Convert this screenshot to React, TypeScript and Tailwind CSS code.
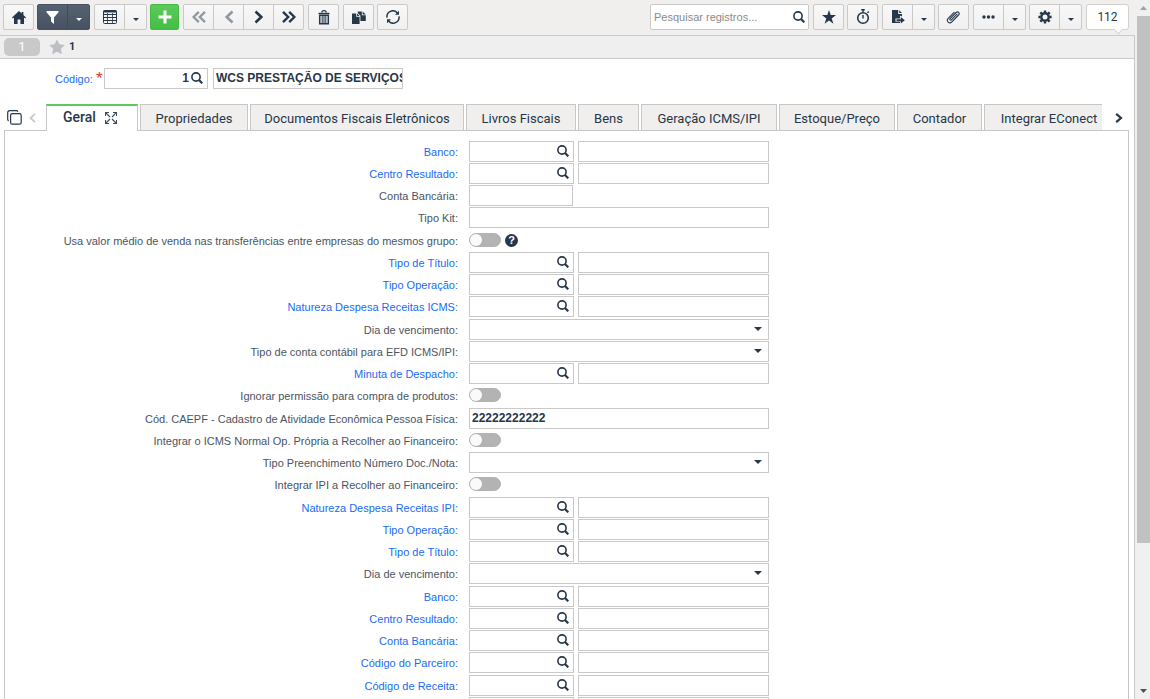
import React, { useId } from "react";
import type { ReactNode } from "react";

type IconProps = { className?: string };

function HomeIcon() {
  return (
    <svg width="14" height="13" viewBox="0 0 14 13" fill="currentColor" aria-hidden="true">
      <path d="M7 0 0 6.6l.8.8L2 6.6V13h3.6V8.6h2.8V13H12V6.6l1.2.8.8-.8-2.6-2.5V.9H9.6v1.5z" />
    </svg>
  );
}

function FunnelIcon() {
  return (
    <svg width="13" height="13" viewBox="0 0 13 13" fill="currentColor" aria-hidden="true">
      <path d="M.5 0h12v1.200L8 6.500v6.500L5 10.500v-4L.5 1.200z" />
    </svg>
  );
}

function GridIcon() {
  return (
    <svg width="14" height="14" viewBox="0 0 14 14" fill="none" stroke="currentColor" aria-hidden="true">
      <rect x=".5" y=".5" width="13" height="13" rx="1" strokeWidth="1" />
      <path d="M.5 1.500h13" strokeWidth="2" />
      <path d="M.5 4.500h13M.5 7.500h13M.5 10.500h13" strokeWidth="1" />
      <path d="M4.500 3v10M9.500 3v10" strokeWidth=".8" />
    </svg>
  );
}

function PlusIcon() {
  return (
    <svg width="14" height="14" viewBox="0 0 14 14" fill="currentColor" aria-hidden="true">
      <path d="M5.500.5h3v5h5v3h-5v5h-3v-5h-5v-3h5z" />
    </svg>
  );
}

function ChevronIcon({ className = "" }: IconProps) {
  return (
    <svg className={className} width="10" height="14" viewBox="0 0 10 14" fill="none" stroke="currentColor" strokeWidth="2.600" aria-hidden="true">
      <path d="m1.500 1.500 5.800 5.500-5.800 5.500" />
    </svg>
  );
}

function DoubleChevronIcon({ className = "" }: IconProps) {
  return (
    <svg className={className} width="14" height="14" viewBox="0 0 14 14" fill="none" stroke="currentColor" strokeWidth="2.400" aria-hidden="true">
      <path d="m1 1.800 5.200 5.200L1 12.200M7.200 1.800 12.400 7l-5.200 5.200" />
    </svg>
  );
}

function TrashIcon() {
  return (
    <svg width="12" height="15" viewBox="0 0 12 15" fill="none" stroke="currentColor" aria-hidden="true">
      <path d="M3.800 2.600C3.800 0 8.200 0 8.200 2.600" strokeWidth="1.300" />
      <path d="M.5 3.500h11" strokeWidth="1.400" />
      <path d="M1.700 5.200h8.600v8.600H1.700z" strokeWidth="1.500" />
      <path d="M4.200 5v8.500M6 5v8.500M7.800 5v8.500" strokeWidth="1" />
    </svg>
  );
}

function CopyIcon() {
  return (
    <svg width="14" height="13" viewBox="0 0 14 13" fill="currentColor" aria-hidden="true">
      <path d="M0 2.400h4.200v3.400h3.400V13H0z" />
      <path d="M5 2.600 7.600 5H5zM5.800.4h4v3.800h4V10H8.400V4.600L5.800 2.200z" />
      <path d="m10.600.4 3.200 3h-3.200z" />
    </svg>
  );
}

function RefreshIcon() {
  return (
    <svg width="14" height="14" viewBox="0 0 14 14" fill="none" stroke="currentColor" strokeWidth="1.500" aria-hidden="true">
      <path d="M1 7.600A5.900 5.900 0 0 1 11.400 3M13 6.400A5.900 5.900 0 0 1 2.600 11" />
      <path d="M13 .8v4H9zM1 13.200v-4h4z" fill="currentColor" stroke="none" />
    </svg>
  );
}

function SearchIcon() {
  return (
    <svg width="12" height="12" viewBox="0 0 12 12" fill="none" stroke="currentColor" aria-hidden="true">
      <circle cx="5" cy="5" r="4.100" strokeWidth="1.600" />
      <path d="m8 8 3.300 3.300" strokeWidth="2.200" />
    </svg>
  );
}

function StarIcon({ className = "" }: IconProps) {
  return (
    <svg className={className} viewBox="0 0 14 14" fill="currentColor" aria-hidden="true">
      <path d="m7 0 1.700 5.100H14L9.700 8.400l1.700 5.300L7 10.500l-4.400 3.200 1.700-5.300L0 5.100h5.300z" />
    </svg>
  );
}

function WideStarIcon({ className = "" }: IconProps) {
  return (
    <svg className={className} viewBox="0 0 16 16" fill="currentColor" aria-hidden="true">
      <path d="m8 .4 2.400 4.900 5.400.7-3.900 3.800.9 5.500L8 12.700l-4.800 2.600.9-5.500L.2 6l5.400-.7z" />
    </svg>
  );
}

function StopwatchIcon() {
  return (
    <svg width="14" height="16" viewBox="0 0 14 16" fill="none" stroke="currentColor" aria-hidden="true">
      <circle cx="7" cy="9" r="5.300" strokeWidth="1.600" />
      <path d="M5.200.8h3.600M7 1v2.500M7 6v3.600M11.400 3.700l1.400-1.300" strokeWidth="1.400" />
    </svg>
  );
}

function ExportIcon() {
  return (
    <svg width="14" height="14" viewBox="0 0 14 14" fill="currentColor" aria-hidden="true">
      <path d="M1 0h6.200v4H11v2.400L9 5.600v2.800H4.500v3.400H9V13H1z" />
      <path d="M8.200.2 11 3H8.200zM5.500 9.200h4.300V7l4 3.200-4 3.300v-2.200H5.500z" />
    </svg>
  );
}

function ClipIcon() {
  return (
    <svg width="16" height="14" viewBox="0 0 15 14" fill="none" stroke="currentColor" strokeWidth="1.100" strokeLinecap="round" aria-hidden="true">
      <path d="m10.500 4.200-5.600 5.700c-.9.900-2.200-.3-1.300-1.300l6-6.100c1.700-1.600 4.200.6 2.500 2.500l-6.700 6.900c-2.600 2.500-6.200-.8-3.700-3.500l5.900-6" />
    </svg>
  );
}

function DotsIcon() {
  return (
    <svg width="13" height="4" viewBox="0 0 13 4" fill="currentColor" aria-hidden="true">
      <circle cx="2" cy="2" r="1.700" />
      <circle cx="6.500" cy="2" r="1.700" />
      <circle cx="11" cy="2" r="1.700" />
    </svg>
  );
}

function GearIcon() {
  return (
    <svg width="14" height="14" viewBox="0 0 14 14" fill="none" stroke="currentColor" aria-hidden="true">
      <circle cx="7" cy="7" r="3.700" strokeWidth="2.400" />
      <path d="M7 .4v2.200M7 11.400v2.200M.4 7h2.200M11.400 7h2.200M2.300 2.300l1.600 1.600M10.100 10.100l1.600 1.600M2.300 11.700l1.600-1.600M10.100 3.900l1.600-1.600" strokeWidth="2.400" />
    </svg>
  );
}

function CaretIcon() {
  return (
    <svg width="8" height="4" viewBox="0 0 8 4" fill="currentColor" aria-hidden="true">
      <path d="M0 0h8L4 4z" />
    </svg>
  );
}

function WindowsIcon() {
  return (
    <svg width="15" height="15" viewBox="0 0 15 15" fill="none" stroke="currentColor" strokeWidth="1.200" aria-hidden="true">
      <rect x="3.600" y="3.600" width="10.600" height="10.600" rx="1.800" />
      <path d="M1.700 10.900C1 10.600.7 10 .7 9.300V2.600C.7 1.500 1.500.7 2.600.7h6.700c.7 0 1.300.4 1.600 1" />
    </svg>
  );
}

function ExpandIcon() {
  return (
    <svg className="text-[#3d4c5d]" width="12" height="12" viewBox="0 0 12 12" fill="none" stroke="currentColor" strokeWidth="1.100" aria-hidden="true">
      <path d="M.5 4V.5H4M8 .5h3.500V4M11.500 8v3.500H8M4 11.500H.5V8M1 1l4 4M11 1 7 5M1 11l4-4M11 11 7 7" />
    </svg>
  );
}

const face = "border-[#c9c9c9] bg-linear-to-b from-[#f8f8f8] to-[#f0f0f0] text-[#26374a]";

function ToolButton({ label, children, className = "" }: { label: string; children: ReactNode; className?: string }) {
  return (
    <button type="button" aria-label={label} className={`flex h-[26px] w-[31px] shrink-0 items-center justify-center rounded-[2px] border ${face} ${className}`}>
      {children}
    </button>
  );
}

function SplitButton({ label, dark = false, children, className = "" }: { label: string; dark?: boolean; children: ReactNode; className?: string }) {
  const tone = dark ? "border-[#465261] bg-linear-to-b from-[#566171] to-[#465261] text-white" : face;
  return (
    <div className={`flex h-[26px] w-[53px] shrink-0 rounded-[2px] border ${tone} ${className}`}>
      <button type="button" aria-label={label} className="flex w-[29px] items-center justify-center">
        {children}
      </button>
      <button type="button" aria-label={`${label}: opções`} className={`flex flex-1 items-center justify-center border-l pt-1 ${dark ? "border-[#414c5a]" : "border-[#c9c9c9]"}`}>
        <svg width="6" height="3" viewBox="0 0 6 3" fill="currentColor" aria-hidden="true">
          <path d="M0 0h6L3 3z" />
        </svg>
      </button>
    </div>
  );
}

function Toolbar() {
  return (
    <header className="flex h-9 shrink-0 items-start justify-between border-b border-[#cbcbcb] bg-[#f0efee] pt-1 pr-[6px] pl-[3px]">
      <div className="flex gap-[3px]">
        <ToolButton label="Início"><HomeIcon /></ToolButton>
        <SplitButton label="Filtro" dark className="mr-px"><FunnelIcon /></SplitButton>
        <SplitButton label="Modo grade"><GridIcon /></SplitButton>
        <div className="flex gap-1">
          <button type="button" aria-label="Adicionar" className="flex h-[26px] w-[29px] items-center justify-center rounded-[2px] border border-[#44b944] bg-linear-to-b from-[#5bca5b] to-[#44be44] text-white">
            <PlusIcon />
          </button>
          <div className={`flex h-[26px] w-[121px] divide-x divide-[#c9c9c9] rounded-[2px] border ${face}`}>
            <button type="button" aria-label="Primeiro" className="flex flex-1 items-center justify-center text-[#8f98a3]"><DoubleChevronIcon className="rotate-180" /></button>
            <button type="button" aria-label="Anterior" className="flex flex-1 items-center justify-center text-[#8f98a3]"><ChevronIcon className="rotate-180" /></button>
            <button type="button" aria-label="Próximo" className="flex flex-1 items-center justify-center"><ChevronIcon /></button>
            <button type="button" aria-label="Último" className="flex flex-1 items-center justify-center"><DoubleChevronIcon /></button>
          </div>
          <ToolButton label="Excluir"><TrashIcon /></ToolButton>
          <ToolButton label="Duplicar"><CopyIcon /></ToolButton>
        </div>
        <ToolButton label="Atualizar"><RefreshIcon /></ToolButton>
      </div>
      <div className="flex gap-[3px]">
        <div className="mr-px flex h-[26px] w-[159px] items-center rounded-[2px] border border-[#c9c9c9] bg-white pr-[3px] pl-[3px] text-[#26374a]">
          <input type="text" aria-label="Pesquisar registros" placeholder="Pesquisar registros..." className="min-w-0 flex-1 text-[11px] outline-none placeholder:text-[#8a8a8a]" />
          <button type="button" aria-label="Pesquisar"><SearchIcon /></button>
        </div>
        <ToolButton label="Favoritos"><StarIcon className="size-[14px]" /></ToolButton>
        <ToolButton label="Cronômetro" className="mr-px"><StopwatchIcon /></ToolButton>
        <SplitButton label="Exportar"><ExportIcon /></SplitButton>
        <ToolButton label="Anexos" className="mr-px"><ClipIcon /></ToolButton>
        <SplitButton label="Mais"><DotsIcon /></SplitButton>
        <SplitButton label="Configurações"><GearIcon /></SplitButton>
        <button type="button" className="relative ml-px h-[26px] w-[43px] rounded-[3px] border border-[#d0d0d0] bg-white font-[Roboto,sans-serif] text-[12px] text-[#26374a]">
          112
          <span className="absolute top-[21px] right-[6px] size-[7px] rotate-45 border-r border-b border-[#d0d0d0] bg-white" />
        </button>
      </div>
    </header>
  );
}

function TextBox({ id, label, value = "", className = "" }: { id?: string; label?: string; value?: string; className?: string }) {
  return (
    <input id={id} aria-label={label} type="text" defaultValue={value} className={`h-[21px] border border-[#c9c9c9] bg-white pl-[2px] pb-px text-[12px] font-bold text-[#26374a] outline-none ${className}`} />
  );
}

function LookupBox({ id, value = "", className = "" }: { id: string; value?: string; className?: string }) {
  return (
    <div className={`flex h-[21px] items-center border border-[#c9c9c9] bg-white pr-1 pb-px text-[#26374a] ${className}`}>
      <input id={id} type="text" defaultValue={value} className="min-w-0 flex-1 pr-[2px] text-right text-[12px] font-bold outline-none" />
      <button type="button" aria-label="Pesquisar"><SearchIcon /></button>
    </div>
  );
}

type Kind = "lookup" | "short" | "text" | "toggle" | "select";
type Field = { label: string; kind: Kind; link?: boolean; value?: string; help?: boolean };

const fields: Field[] = [
  { label: "Banco:", kind: "lookup", link: true },
  { label: "Centro Resultado:", kind: "lookup", link: true },
  { label: "Conta Bancária:", kind: "short" },
  { label: "Tipo Kit:", kind: "text" },
  { label: "Usa valor médio de venda nas transferências entre empresas do mesmos grupo:", kind: "toggle", help: true },
  { label: "Tipo de Título:", kind: "lookup", link: true },
  { label: "Tipo Operação:", kind: "lookup", link: true },
  { label: "Natureza Despesa Receitas ICMS:", kind: "lookup", link: true },
  { label: "Dia de vencimento:", kind: "select" },
  { label: "Tipo de conta contábil para EFD ICMS/IPI:", kind: "select" },
  { label: "Minuta de Despacho:", kind: "lookup", link: true },
  { label: "Ignorar permissão para compra de produtos:", kind: "toggle" },
  { label: "Cód. CAEPF - Cadastro de Atividade Econômica Pessoa Física:", kind: "text", value: "22222222222" },
  { label: "Integrar o ICMS Normal Op. Própria a Recolher ao Financeiro:", kind: "toggle" },
  { label: "Tipo Preenchimento Número Doc./Nota:", kind: "select" },
  { label: "Integrar IPI a Recolher ao Financeiro:", kind: "toggle" },
  { label: "Natureza Despesa Receitas IPI:", kind: "lookup", link: true },
  { label: "Tipo Operação:", kind: "lookup", link: true },
  { label: "Tipo de Título:", kind: "lookup", link: true },
  { label: "Dia de vencimento:", kind: "select" },
  { label: "Banco:", kind: "lookup", link: true },
  { label: "Centro Resultado:", kind: "lookup", link: true },
  { label: "Conta Bancária:", kind: "lookup", link: true },
  { label: "Código do Parceiro:", kind: "lookup", link: true },
  { label: "Código de Receita:", kind: "lookup", link: true },
  { label: "", kind: "lookup" },
];

function Control({ field, id }: { field: Field; id: string }) {
  switch (field.kind) {
    case "lookup":
      return (
        <div className="flex w-[300px] gap-1">
          <LookupBox id={id} className="w-[105px]" />
          <TextBox label={`Descrição ${field.label}`} className="min-w-0 flex-1" />
        </div>
      );
    case "short":
      return <TextBox id={id} className="w-[104px]" />;
    case "text":
      return <TextBox id={id} value={field.value} className="w-[300px]" />;
    case "select":
      return (
        <div className="relative w-[300px] text-[#26374a]">
          <select id={id} className="block h-[21px] w-full appearance-none border border-[#c9c9c9] bg-white px-[3px] text-[12px] outline-none">
            <option value=""></option>
          </select>
          <span className="pointer-events-none absolute top-2 right-[7px]"><CaretIcon /></span>
        </div>
      );
    case "toggle":
      return (
        <div className="flex items-center gap-1 pb-px">
          <input
            id={id}
            type="checkbox"
            className="h-[14px] w-8 appearance-none rounded-full border border-[#b3b3b3] bg-[#b3b3b3] before:block before:size-3 before:rounded-full before:bg-[#fafafa] checked:bg-[#5bca5b] checked:before:ml-auto"
          />
          {field.help && (
            <button type="button" aria-label="Ajuda" className="flex size-[13px] items-center justify-center rounded-full bg-[#26374a] text-[11px] leading-none font-bold text-white">
              ?
            </button>
          )}
        </div>
      );
  }
}

function FieldRow({ field }: { field: Field }) {
  const id = useId();
  return (
    <div className="mb-px flex h-[21px] items-center gap-[11px] nth-[4n]:mb-[2px]">
      <label htmlFor={id} className={`w-[453px] shrink-0 pt-[2px] text-right text-[11px] whitespace-nowrap ${field.link ? "text-[#1a6bf5]" : "text-[#4a5563]"}`}>
        {field.label}
      </label>
      <Control field={field} id={id} />
    </div>
  );
}

const tabs = [
  { name: "Propriedades", width: "w-[108px]" },
  { name: "Documentos Fiscais Eletrônicos", width: "w-[214px]" },
  { name: "Livros Fiscais", width: "w-[110px]" },
  { name: "Bens", width: "w-[61px]" },
  { name: "Geração ICMS/IPI", width: "w-[136px]" },
  { name: "Estoque/Preço", width: "w-[116px]" },
  { name: "Contador", width: "w-[85px]" },
  { name: "Integrar EConect", width: "w-[130px]" },
];

function TabBar() {
  return (
    <div className="flex h-[27px] shrink-0 items-stretch pr-[5px] pl-1 text-[#26374a]">
      <div className="flex w-[42px] items-center gap-[7px] border-b border-[#c9c6c6] pt-px pl-[3px]">
        <button type="button" aria-label="Abas"><WindowsIcon /></button>
        <button type="button" aria-label="Abas anteriores" className="text-[#c4c8cc]">
          <svg width="7" height="10" viewBox="0 0 7 10" fill="none" stroke="currentColor" strokeWidth="1.800" aria-hidden="true">
            <path d="M6 .8 1.500 5 6 9.200" />
          </svg>
        </button>
      </div>
      <div role="tablist" className="flex min-w-0 flex-1 overflow-hidden font-[Roboto,sans-serif] text-[13px]">
        <button type="button" role="tab" aria-selected="true" className="flex w-[92px] shrink-0 items-center gap-[9px] border-x border-t-2 border-x-[#c9c6c6] border-t-[#5bca5b] bg-white pb-[2px] pl-4 text-[14px] font-medium">
          Geral <ExpandIcon />
        </button>
        {tabs.map((tab) => (
          <div key={tab.name} className="shrink-0 border-b border-[#c9c6c6] pl-[2px]">
            <button type="button" role="tab" aria-selected="false" className={`h-full border border-b-0 border-[#c9c6c6] bg-[#f0efed] pt-[2px] text-center whitespace-nowrap ${tab.width}`}>
              {tab.name}
            </button>
          </div>
        ))}
        <div className="flex-1 border-b border-[#c9c6c6]" />
      </div>
      <button type="button" aria-label="Próximas abas" className="flex w-[27px] items-center justify-center border-b border-[#c9c6c6] pt-[2px] pl-[6px]">
        <svg width="8" height="10" viewBox="0 0 8 10" fill="none" stroke="currentColor" strokeWidth="2.200" aria-hidden="true">
          <path d="M1.200.8 6 5 1.200 9.200" />
        </svg>
      </button>
    </div>
  );
}

function ScrollBar() {
  return (
    <div className="flex w-[15px] shrink-0 flex-col bg-[#f0f0f0] pl-[2px]" aria-hidden="true">
      <svg className="mx-auto my-[6px] shrink-0 text-[#a3a3a3]" width="7" height="4" viewBox="0 0 7 4" fill="currentColor"><path d="M0 4h7L3.500 0z" /></svg>
      <div className="flex min-h-0 flex-1 flex-col">
        <div className="h-[79%] bg-[#c1c1c1]" />
      </div>
      <svg className="mx-auto my-[6px] shrink-0 text-[#505050]" width="7" height="4" viewBox="0 0 7 4" fill="currentColor"><path d="M0 0h7L3.500 4z" /></svg>
    </div>
  );
}

export default function App() {
  return (
    <div className="flex h-screen overflow-hidden bg-white font-['Liberation_Sans',Arial,sans-serif]">
      <div className="flex min-w-0 flex-1 flex-col">
        <Toolbar />
        <main className="flex min-h-0 flex-1 flex-col border-r border-[#c9c9c9]">
          <div className="flex h-[23px] shrink-0 items-center border-b border-[#cbcbcb] bg-[#f0efef] pl-1 font-[Roboto,sans-serif] text-[#26374a]">
            <span className="flex h-[18px] w-9 items-center justify-center rounded-[5px] bg-[#c9c9c9] text-[13px] text-white">1</span>
            <WideStarIcon className="ml-[9px] size-4 text-[#bcc0c5]" />
            <span className="ml-1 pt-px text-[11px] font-bold">1</span>
          </div>
          <div className="flex shrink-0 items-center pt-[9px] pb-[15px] pl-[55px]">
            <label htmlFor="codigo" className="flex w-[49px] items-center gap-[3px] pt-px text-[11px] text-[#1a6bf5]">
              Código: <span className="text-[17px] leading-4 text-[#d9362b]">*</span>
            </label>
            <LookupBox id="codigo" value="1" className="mr-[5px] w-[104px]" />
            <TextBox label="Nome" value="WCS PRESTAÇÃO DE SERVIÇOS" className="w-[190px]" />
          </div>
          <TabBar />
          <section role="tabpanel" aria-label="Geral" className="mr-[5px] ml-1 min-h-0 flex-1 overflow-hidden border-x border-[#c9c6c6] pt-[10px]">
            {fields.map((field, i) => (
              <FieldRow key={i} field={field} />
            ))}
          </section>
        </main>
      </div>
      <ScrollBar />
    </div>
  );
}
